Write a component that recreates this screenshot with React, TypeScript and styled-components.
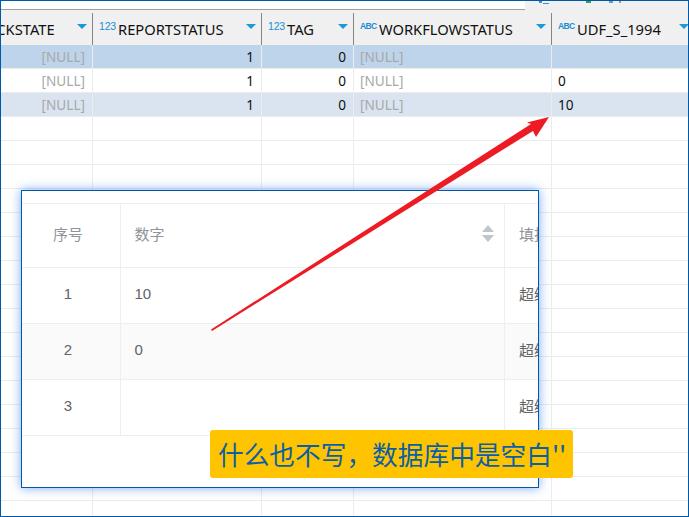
import styled, { createGlobalStyle } from "styled-components";

const GlobalStyle = createGlobalStyle`
  html, body {
    margin: 0;
    padding: 0;
    background: #fff;
  }
`;

const Frame = styled.div`
  position: relative;
  box-sizing: border-box;
  width: 689px;
  height: 517px;
  border: 1px solid #0058a8;
  overflow: hidden;
  background: #fff;
  font-family: "Noto Sans", "Noto Sans CJK SC", sans-serif;
`;

const TopStrip = styled.div`
  display: flex;
  height: 9px;
  background: #f0f0f0;
`;

const SearchBox = styled.div`
  width: 524px;
  background: #fff;
  border-bottom: 1px solid #a0a0a0;
  box-sizing: border-box;
`;

const ToolIcons = styled.svg`
  display: block;
  margin-left: 12px;
`;

const Table = styled.div`
  width: 752px;
  margin-left: -58px;
`;

const HeaderRow = styled.div`
  display: flex;
  height: 35px;
  padding-top: 3px;
  box-sizing: border-box;
  background: #f0f0f0;
`;

const HeaderCell = styled.div<{ $w: number }>`
  display: flex;
  flex: none;
  width: ${(p) => p.$w}px;
  box-sizing: border-box;
  padding: 0 5px 0 6px;
  border-right: 1px solid #858585;
  font-size: 14.7px;
  color: #111;
  white-space: nowrap;
`;

const TypeBadge = styled.span<{ $abc?: boolean }>`
  flex: none;
  width: 19px;
  margin-top: 8px;
  color: #1a8fd6;
  font-family: "Liberation Sans", sans-serif;
  font-size: ${(p) => (p.$abc ? "8.5px" : "10.5px")};
  font-weight: ${(p) => (p.$abc ? 700 : 400)};
  line-height: 10px;
  letter-spacing: ${(p) => (p.$abc ? "-0.6px" : "-0.2px")};
`;

const ColumnName = styled.span`
  line-height: 32px;
`;

const SortArrow = styled.span`
  flex: none;
  width: 0;
  height: 0;
  margin: 11px 0 0 auto;
  border-left: 5px solid transparent;
  border-right: 5px solid transparent;
  border-top: 5px solid #1a9ad6;
`;

const Row = styled.div<{ $tone?: "selected" | "alt" }>`
  display: flex;
  height: 24px;
  background: ${(p) =>
    p.$tone === "selected" ? "#bed4ea" : p.$tone === "alt" ? "#dae4f0" : "#fff"};
  border-bottom: 1px solid #ececec;
  box-sizing: border-box;
`;

const Cell = styled.div<{ $w: number; $right?: boolean; $muted?: boolean }>`
  flex: none;
  width: ${(p) => p.$w}px;
  box-sizing: border-box;
  padding: 0 7px 0 6px;
  border-right: 1px solid #ececec;
  text-align: ${(p) => (p.$right ? "right" : "left")};
  color: ${(p) => (p.$muted ? "#a8a8a8" : "#111")};
  font-size: 13.6px;
  line-height: 23px;
`;

const Dialog = styled.div`
  position: absolute;
  left: 20px;
  top: 189px;
  width: 518px;
  height: 298px;
  box-sizing: border-box;
  border: 1px solid #0058a8;
  background: #fff;
  box-shadow: 0 0 10px rgba(50, 125, 235, 0.65);
  overflow: hidden;
  padding-top: 12px;
  font-family: "Liberation Sans", "Noto Sans CJK SC", sans-serif;
  font-size: 15px;
`;

const DialogTable = styled.div`
  border-top: 1px solid #ebeef5;
  display: grid;
  grid-template-columns: 99px 384px 120px;
  grid-template-rows: 64px 56px 56px 56px;
`;

const DialogHeadRow = styled.div`
  display: contents;
  color: #909399;
`;

const DialogRow = styled.div<{ $striped?: boolean }>`
  display: contents;
  color: #606266;
  & > div {
    background: ${(p) => (p.$striped ? "#fafafa" : "#fff")};
  }
`;

const DialogCell = styled.div<{ $center?: boolean; $last?: boolean }>`
  display: flex;
  align-items: center;
  justify-content: ${(p) => (p.$center ? "center" : "flex-start")};
  box-sizing: border-box;
  padding: ${(p) =>
    p.$center ? "0 6px 4px 0" : p.$last ? "0 14px 4px 14px" : "0 14px 4px 13.5px"};
  border-bottom: 1px solid #ebeef5;
  border-right: ${(p) => (p.$last ? "none" : "1px solid #ebeef5")};
  white-space: nowrap;
`;

const SortCaret = styled.span`
  display: flex;
  flex-direction: column;
  gap: 3px;
  margin-left: auto;
  margin-right: -4px;
`;

const Caret = styled.i<{ $down?: boolean }>`
  display: block;
  width: 0;
  height: 0;
  border-left: 6px solid transparent;
  border-right: 6px solid transparent;
  ${(p) =>
    p.$down ? "border-top: 7px solid #c0c4cc;" : "border-bottom: 7px solid #c0c4cc;"}
`;

const Callout = styled.div`
  position: absolute;
  left: 209px;
  top: 429px;
  width: 363px;
  height: 48px;
  box-sizing: border-box;
  padding-left: 8px;
  border-radius: 3px;
  background: #ffc400;
  color: #0b5fa5;
  font-family: "Noto Sans CJK SC", sans-serif;
  font-size: 25.7px;
  line-height: 47px;
  white-space: nowrap;
`;

const Arrow = styled.svg`
  position: absolute;
  left: -1px;
  top: -1px;
  pointer-events: none;
`;

const columns = [
  { name: "CHECKSTATE", width: 150, type: "123" },
  { name: "REPORTSTATUS", width: 169, type: "123" },
  { name: "TAG", width: 92, type: "123" },
  { name: "WORKFLOWSTATUS", width: 198, type: "ABC" },
  { name: "UDF_S_1994", width: 143, type: "ABC" },
];

const rows: { tone?: "selected" | "alt"; last: string }[] = [
  { tone: "selected", last: "" },
  { last: "0" },
  { tone: "alt", last: "10" },
];

const emptyRows = Array.from({ length: 17 }, (_, i) => i);

export default function App() {
  return (
    <Frame>
      <GlobalStyle />
      <TopStrip>
        <SearchBox />
        <ToolIcons width="90" height="4" viewBox="0 0 90 4">
          <rect x="2" y="0" width="3" height="2" fill="#3a8fd0" />
          <rect x="6" y="2" width="6" height="1" fill="#3a8fd0" />
          <rect x="49" y="0" width="5" height="2" fill="#2e9e5b" />
          <rect x="72" y="0" width="4" height="2" fill="#6b9ac4" />
          <rect x="82" y="0" width="2" height="2" fill="#999" />
        </ToolIcons>
      </TopStrip>
      <Table>
        <HeaderRow>
          {columns.map((c) => (
            <HeaderCell key={c.name} $w={c.width}>
              <TypeBadge $abc={c.type === "ABC"}>{c.type}</TypeBadge>
              <ColumnName>{c.name}</ColumnName>
              <SortArrow />
            </HeaderCell>
          ))}
        </HeaderRow>
        {rows.map((r, i) => (
          <Row key={i} $tone={r.tone}>
            <Cell $w={150} $right $muted>[NULL]</Cell>
            <Cell $w={169} $right>1</Cell>
            <Cell $w={92} $right>0</Cell>
            <Cell $w={198} $muted>[NULL]</Cell>
            <Cell $w={143}>{r.last}</Cell>
          </Row>
        ))}
        {emptyRows.map((i) => (
          <Row key={i}>
            {columns.map((c) => (
              <Cell key={c.name} $w={c.width} />
            ))}
          </Row>
        ))}
      </Table>

      <Dialog>
        <DialogTable>
          <DialogHeadRow>
            <DialogCell $center>序号</DialogCell>
            <DialogCell>
              数字
              <SortCaret>
                <Caret />
                <Caret $down />
              </SortCaret>
            </DialogCell>
            <DialogCell $last>填报人</DialogCell>
          </DialogHeadRow>
          <DialogRow>
            <DialogCell $center>1</DialogCell>
            <DialogCell>10</DialogCell>
            <DialogCell $last>超级管理员</DialogCell>
          </DialogRow>
          <DialogRow $striped>
            <DialogCell $center>2</DialogCell>
            <DialogCell>0</DialogCell>
            <DialogCell $last>超级管理员</DialogCell>
          </DialogRow>
          <DialogRow>
            <DialogCell $center>3</DialogCell>
            <DialogCell />
            <DialogCell $last>超级管理员</DialogCell>
          </DialogRow>
        </DialogTable>
      </Dialog>

      <Arrow width="689" height="517" viewBox="0 0 689 517">
        <path
          d="M211 329.5 L531 124 L527 122.5 L549 117 L536 137 L533 131 L212 331 Z"
          fill="#ed1c24"
        />
      </Arrow>

      <Callout>什么也不写，数据库中是空白''</Callout>
    </Frame>
  );
}
